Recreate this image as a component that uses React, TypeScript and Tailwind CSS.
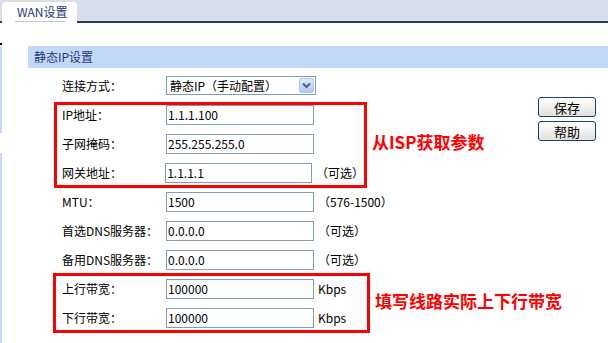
import React from "react";

const Row = ({ label, value, suffix }: { label: string; value: string; suffix?: string }) => (
  <div className="flex h-[29px] items-center">
    <div className="w-[104px]">{label}</div>
    <input
      readOnly
      value={value}
      className="h-[20px] w-[148px] border border-[#7f9db9] bg-white px-[1px] text-[12px] text-black outline-none"
    />
    {suffix && <span className="ml-[4px] whitespace-nowrap">{suffix}</span>}
  </div>
);

export default function App() {
  return (
    <div className="h-[343px] w-[608px] overflow-hidden bg-white font-['Noto_Sans_CJK_SC',sans-serif] text-[12px] text-black">
      {/* top tab bar */}
      <div className="flex h-[23px] items-end border-b-2 border-[#22404f] bg-[#d9dfea] pl-[2px]">
        <div className="-mb-[2px] h-[21px] w-[75px] rounded-t-[4px] bg-white pl-[13px]">
          <div className="h-[20px] w-[50px] whitespace-nowrap border-b border-[#c3cad2] pl-[2px] leading-[19px] text-[#1c3c78]">WAN设置</div>
        </div>
      </div>

      <div className="flex h-[320px]">
        {/* left edge strip */}
        <div className="flex w-[2px] shrink-0 flex-col">
          <div className="mt-[20px] h-[2px] bg-black" />
          <div className="mt-[1px] h-[87px] bg-[#c4d9fa]" />
          <div className="mt-[20px] flex-1 bg-[#c4d9fa]" />
        </div>

        <div className="min-w-0 flex-1">
          <div className="ml-[26px] mt-[23px] h-[22px] bg-[#c4d9fa] pl-[6px] leading-[22px] text-[#1c3c78]">静态IP设置</div>

          <div className="flex items-start">
            <div className="min-w-0 flex-1 pl-[60px] pt-[3px]">
              <div className="flex h-[29px] items-center">
                <div className="w-[104px]">连接方式：</div>
                <div className="flex h-[19px] w-[150px] items-center justify-between border border-[#7f9db9] bg-white">
                  <span className="pl-[3px]">静态IP（手动配置）</span>
                  <span className="mr-[1px] flex h-[15px] w-[15px] items-center justify-center rounded-[2px] border border-[#b4c6ee] bg-linear-to-b from-[#dfe8fc] to-[#b4c9f4]">
                    <svg width="9" height="7" viewBox="0 0 9 7">
                      <path d="M1 1.5 L4.5 5 L8 1.5" fill="none" stroke="#4d6185" strokeWidth="2" />
                    </svg>
                  </span>
                </div>
              </div>

              <div className="flex items-center">
                <div className="relative w-[302px] shrink-0">
                  <Row label="IP地址：" value="1.1.1.100" />
                  <Row label="子网掩码：" value="255.255.255.0" />
                  <Row label="网关地址：" value="1.1.1.1" suffix="（可选）" />
                  <div className="pointer-events-none absolute -bottom-[1px] -left-[8px] -right-[3px] top-[2px] border-[3px] border-[#ff0000]" />
                </div>
                <div className="mb-[3px] ml-[8px] whitespace-nowrap text-[17px] font-bold text-[#ff0000]">从ISP获取参数</div>
              </div>

              <Row label="MTU：" value="1500" suffix="（576-1500）" />
              <Row label="首选DNS服务器：" value="0.0.0.0" suffix="（可选）" />
              <Row label="备用DNS服务器：" value="0.0.0.0" suffix="（可选）" />

              <div className="flex items-center">
                <div className="relative w-[302px] shrink-0">
                  <Row label="上行带宽：" value="100000" suffix="Kbps" />
                  <Row label="下行带宽：" value="100000" suffix="Kbps" />
                  <div className="pointer-events-none absolute -bottom-[1px] -left-[9px] -right-[6px] -top-[1px] border-[3px] border-[#ff0000]" />
                </div>
                <div className="mb-[5px] ml-[11px] whitespace-nowrap text-[17px] font-bold text-[#ff0000]">填写线路实际上下行带宽</div>
              </div>
            </div>

            <div className="mr-[12px] mt-[29px] flex shrink-0 flex-col gap-[4px]">
              <button className="h-[20px] w-[58px] rounded-[3px] border border-[#1d3e6e] bg-linear-to-b from-white to-[#e2e2dc] text-[13px] leading-none">保存</button>
              <button className="h-[20px] w-[58px] rounded-[3px] border border-[#1d3e6e] bg-linear-to-b from-white to-[#e2e2dc] text-[13px] leading-none">帮助</button>
            </div>
          </div>
        </div>
      </div>
    </div>
  );
}
